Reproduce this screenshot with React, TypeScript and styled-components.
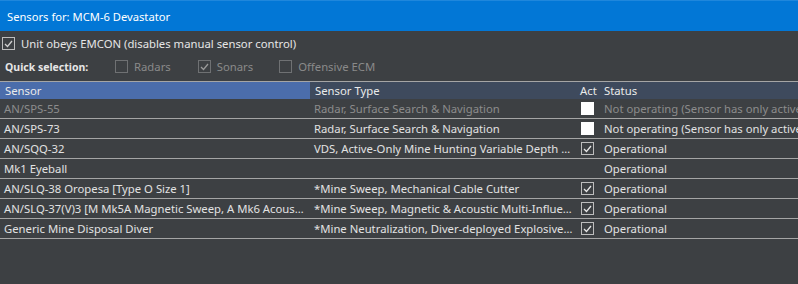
import React from 'react';
import styled, { createGlobalStyle } from 'styled-components';

const Global = createGlobalStyle`
  html, body {
    margin: 0;
    padding: 0;
    background: #3d4043;
    overflow: hidden;
  }
  body {
    font-family: "Segoe UI", "Noto Sans", sans-serif;
    font-size: 11.3px;
    color: #e0e0e0;
  }
`;

const Window = styled.div`
  width: 798px;
  height: 284px;
  background: #3d4043;
  overflow: hidden;
`;

const TitleBar = styled.div`
  height: 31px;
  background: #0277d6;
  border-top: 1px solid #1f87dc;
  box-sizing: border-box;
  display: flex;
  align-items: center;
  padding-left: 7px;
  color: #ffffff;
  font-size: 11.2px;
`;

const Options = styled.div`
  display: flex;
  flex-direction: column;
  padding: 4px 0 0 2px;
`;

const OptionRow = styled.div`
  display: flex;
  align-items: center;
  height: 17px;
`;

const QuickRow = styled(OptionRow)`
  margin-top: 6px;
  padding-left: 3px;
`;

const QuickLabel = styled.span`
  font-weight: 700;
  font-size: 10.5px;
  width: 110px;
  color: #e6e6e6;
`;

const Check = styled.label<{ $disabled?: boolean; $gap?: number }>`
  display: flex;
  align-items: center;
  gap: 6px;
  margin-right: ${(p) => p.$gap ?? 0}px;
  color: ${(p) => (p.$disabled ? '#8a8a8a' : '#e6e6e6')};
`;

const Box = styled.span<{ $disabled?: boolean; $fill?: boolean }>`
  width: 13px;
  height: 13px;
  box-sizing: border-box;
  border: 1px solid ${(p) => (p.$fill ? '#ffffff' : p.$disabled ? '#6f7173' : '#bdbdbd')};
  background: ${(p) => (p.$fill ? '#ffffff' : 'transparent')};
  display: inline-flex;
  align-items: center;
  justify-content: center;
  flex: none;
`;

const Tick = ({ color }: { color: string }) => (
  <svg width="9" height="8" viewBox="0 0 9 8">
    <path d="M1 4 L3.5 6.5 L8 1" fill="none" stroke={color} strokeWidth="1.3" />
  </svg>
);

const Table = styled.div`
  margin-top: 6px;
  width: 1000px;
  border-top: 1px solid #a5a5a5;
`;

const cols = '310px 267px 23px 400px';

const HeaderRow = styled.div`
  display: grid;
  grid-template-columns: ${cols};
  height: 17px;
  background: #3e4a5d;
`;

const HeaderCell = styled.div<{ $selected?: boolean; $pad?: number }>`
  background: ${(p) => (p.$selected ? '#4b6dab' : 'transparent')};
  color: #eaeaea;
  padding-left: ${(p) => p.$pad ?? 5}px;
  line-height: 17px;
  white-space: nowrap;
  overflow: hidden;
`;

const Row = styled.div`
  display: grid;
  grid-template-columns: ${cols};
  height: 20px;
  box-sizing: border-box;
  border-bottom: 1px solid #a5a5a5;
  align-items: center;
`;

const Cell = styled.div<{ $dim?: boolean }>`
  padding-left: 4px;
  padding-right: 4px;
  white-space: nowrap;
  overflow: hidden;
  text-overflow: ellipsis;
  color: ${(p) => (p.$dim ? '#8c8c8c' : '#e2e2e2')};
`;

const ActCell = styled.div`
  display: flex;
  align-items: center;
  padding-left: 4px;
`;

type SensorRow = {
  name: string;
  type: string;
  act: 'on' | 'off' | 'none';
  status: string;
  dim?: boolean;
};

const rows: SensorRow[] = [
  { name: 'AN/SPS-55', type: 'Radar, Surface Search & Navigation', act: 'off', status: 'Not operating (Sensor has only active emission mode and unit obeys EMCON)', dim: true },
  { name: 'AN/SPS-73', type: 'Radar, Surface Search & Navigation', act: 'off', status: 'Not operating (Sensor has only active emission mode and unit obeys EMCON)' },
  { name: 'AN/SQQ-32', type: 'VDS, Active-Only Mine Hunting Variable Depth Sonar', act: 'on', status: 'Operational' },
  { name: 'Mk1 Eyeball', type: '', act: 'none', status: 'Operational' },
  { name: 'AN/SLQ-38 Oropesa [Type O Size 1]', type: '*Mine Sweep, Mechanical Cable Cutter', act: 'on', status: 'Operational' },
  { name: 'AN/SLQ-37(V)3 [M Mk5A Magnetic Sweep, A Mk6 Acoustic Sweep]', type: '*Mine Sweep, Magnetic & Acoustic Multi-Influence', act: 'on', status: 'Operational' },
  { name: 'Generic Mine Disposal Diver', type: '*Mine Neutralization, Diver-deployed Explosive Charge', act: 'on', status: 'Operational' },
];

export default function App() {
  return (
    <Window>
      <Global />
      <TitleBar>Sensors for: MCM-6 Devastator</TitleBar>
      <Options>
        <OptionRow>
          <Check>
            <Box>
              <Tick color="#d0d0d0" />
            </Box>
            Unit obeys EMCON (disables manual sensor control)
          </Check>
        </OptionRow>
        <QuickRow>
          <QuickLabel>Quick selection:</QuickLabel>
          <Check $disabled $gap={27}>
            <Box $disabled />
            Radars
          </Check>
          <Check $disabled $gap={26}>
            <Box $disabled>
              <Tick color="#9a9a9a" />
            </Box>
            Sonars
          </Check>
          <Check $disabled>
            <Box $disabled />
            Offensive ECM
          </Check>
        </QuickRow>
      </Options>
      <Table>
        <HeaderRow>
          <HeaderCell $selected>Sensor</HeaderCell>
          <HeaderCell>Sensor Type</HeaderCell>
          <HeaderCell $pad={3}>Act</HeaderCell>
          <HeaderCell $pad={4}>Status</HeaderCell>
        </HeaderRow>
        {rows.map((r) => (
          <Row key={r.name}>
            <Cell $dim={r.dim}>{r.name}</Cell>
            <Cell $dim={r.dim}>{r.type}</Cell>
            <ActCell>
              {r.act === 'off' && <Box $fill />}
              {r.act === 'on' && (
                <Box>
                  <Tick color="#e6e6e6" />
                </Box>
              )}
            </ActCell>
            <Cell $dim={r.dim}>{r.status}</Cell>
          </Row>
        ))}
      </Table>
    </Window>
  );
}
